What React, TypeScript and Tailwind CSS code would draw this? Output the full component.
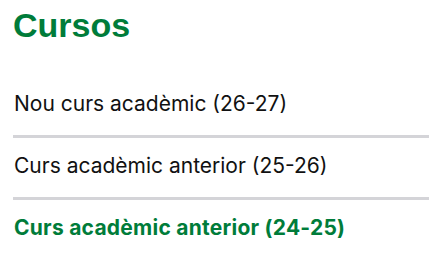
const cursos = [
  { label: "Nou curs acadèmic (26-27)", active: false },
  { label: "Curs acadèmic anterior (25-26)", active: false },
  { label: "Curs acadèmic anterior (24-25)", active: true },
];

export default function App() {
  return (
    <div className="min-h-screen bg-white pl-[13px] pt-[5px]">
      <h2 className="font-['Liberation_Sans',Arial,sans-serif] text-[34px] font-bold leading-[40px] text-[#007c3a]">
        Cursos
      </h2>
      <ul className="mt-[31px] font-['Inter',sans-serif]">
        {cursos.map((c, i) => (
          <li
            key={c.label}
            className={
              i < cursos.length - 1
                ? "border-b-[3px] border-[#d4d4d8] pt-[14px] pb-[17px]"
                : "pt-[14px] pb-[17px]"
            }
          >
            <a
              href="#"
              className={
                c.active
                  ? "block pl-px text-[21px] font-bold leading-[28px] tracking-[0.25px] text-[#007c3a]"
                  : "block pl-px text-[21px] leading-[28px] text-[#111111]"
              }
            >
              {c.label}
            </a>
          </li>
        ))}
      </ul>
    </div>
  );
}
